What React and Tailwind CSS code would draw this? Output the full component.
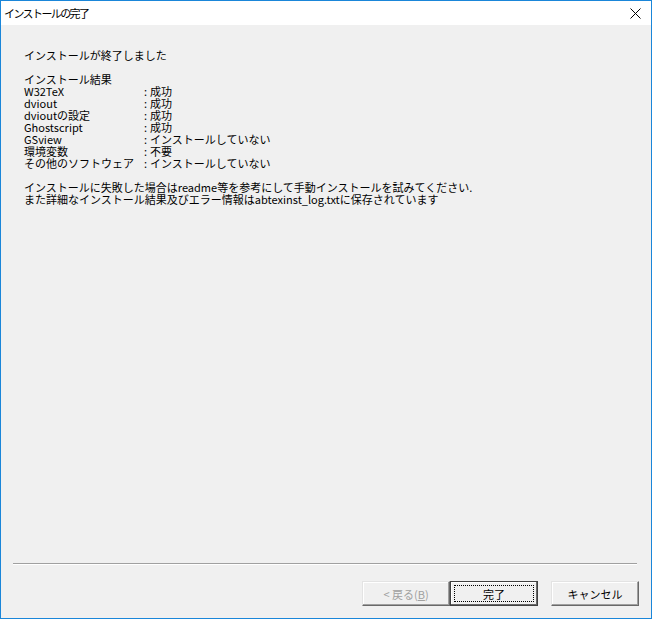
import React from "react";

const font = { fontFamily: '"Noto Sans CJK JP", "Noto Sans", sans-serif' };

const rows = [
  ["W32TeX", "成功"],
  ["dviout", "成功"],
  ["dvioutの設定", "成功"],
  ["Ghostscript", "成功"],
  ["GSview", "インストールしていない"],
  ["環境変数", "不要"],
  ["その他のソフトウェア", "インストールしていない"],
];

function Btn({ children, primary, disabled }) {
  return (
    <div
      className={
        "w-[88px] h-[25px] flex items-center justify-center text-[11px] leading-[12px] bg-[#f0f0f0] " +
        (primary
          ? "border border-[#404040] shadow-[inset_-1px_-1px_0_#696969,inset_1px_1px_0_#fff]"
          : "border border-t-[#e3e3e3] border-l-[#e3e3e3] border-r-[#696969] border-b-[#696969] shadow-[inset_-1px_-1px_0_#a0a0a0,inset_1px_1px_0_#fff]") +
        (disabled ? " text-[#a0a0a0]" : " text-black")
      }
    >
      {primary ? (
        <div className="w-[80px] h-[17px] border border-dotted border-black flex items-center justify-center">
          {children}
        </div>
      ) : (
        children
      )}
    </div>
  );
}

export default function App() {
  return (
    <div
      className="w-[652px] h-[619px] border border-[#1a86d9] flex flex-col bg-[#f0f0f0] text-black"
      style={font}
    >
      <div className="h-[24px] bg-white flex items-center justify-between pl-[3px] pr-[10px] shrink-0">
        <span className="text-[11px] leading-[12px] tracking-[-1.6px]">インストールの完了</span>
        <svg width="11" height="11" viewBox="0 0 11 11">
          <path d="M0.5 0.5 L10.5 10.5 M10.5 0.5 L0.5 10.5" stroke="#000" strokeWidth="1" />
        </svg>
      </div>
      <div className="flex-1 flex flex-col">
        <div className="flex-1 pt-[24px] pl-[23px] text-[11px] leading-[12px]">
          <div>インストールが終了しました</div>
          <div className="mt-[12px]">インストール結果</div>
          <div className="grid grid-cols-[120px_1fr]">
            {rows.map(([a, b]) => (
              <React.Fragment key={a}>
                <div>{a}</div>
                <div>
                  <span className="inline-block w-[6px]">:</span>
                  {b}
                </div>
              </React.Fragment>
            ))}
          </div>
          <div className="mt-[12px]">
            インストールに失敗した場合はreadme等を参考にして手動インストールを試みてください.
          </div>
          <div>また詳細なインストール結果及びエラー情報はabtexinst_log.txtに保存されています</div>
        </div>
        <div className="ml-[12px] mr-[14px] h-[2px] border-t border-[#a0a0a0] border-b border-b-white" />
        <div className="flex justify-end items-start pt-[16px] pr-[12px] h-[53px]">
          <Btn disabled>
            <span>&lt; 戻る(<span className="underline">B</span>)</span>
          </Btn>
          <Btn primary>完了</Btn>
          <div className="w-[13px]" />
          <Btn>キャンセル</Btn>
        </div>
      </div>
    </div>
  );
}
